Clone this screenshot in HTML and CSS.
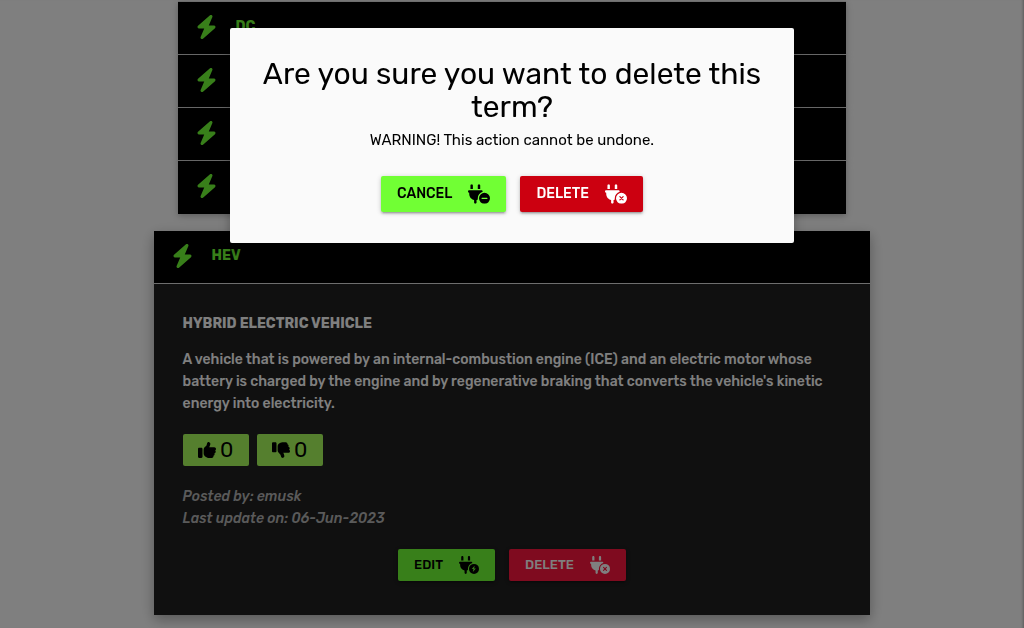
FILE: index.html
```html
<!DOCTYPE html>
<html lang="en">
<head>
<meta charset="utf-8">
<meta name="viewport" content="width=device-width, initial-scale=1">
<title>Delete term</title>
<link rel="stylesheet" href="styles.css">
</head>
<body>
<svg class="sprite" aria-hidden="true">
  <symbol id="bolt" viewBox="0 0 448 512"><path d="M349.400 44.600c5.900-13.700 1.500-29.700-10.600-38.500s-28.600-8-39.900 1.800l-256 224C32.900 240.700 29.300 255.100 34 267.600S50.600 288 64 288H175.500L98.600 467.400c-5.900 13.700-1.500 29.700 10.600 38.500s28.600 8 39.900-1.800l256-224c10-8.800 13.600-22.900 8.900-35.300s-16.600-20.700-30-20.700H272.500L349.400 44.600z"/></symbol>
  <symbol id="plug" viewBox="0 0 576 512"><path d="M96 0C78.300 0 64 14.300 64 32v96h64V32c0-17.700-14.300-32-32-32zM288 0c-17.700 0-32 14.300-32 32v96h64V32c0-17.700-14.300-32-32-32zM32 160c-17.700 0-32 14.300-32 32s14.300 32 32 32v32c0 77.400 55 142 128 156.800V480c0 17.700 14.300 32 32 32s32-14.300 32-32V412.800c12.300-2.500 24.100-6.400 35.100-11.500c-2.100-10.800-3.100-21.900-3.100-33.300c0-80.300 53.800-148 127.300-169.200c.5-2.200 .7-4.500 .7-6.800c0-17.700-14.300-32-32-32H32zM432 512a144 144 0 1 0 0-288 144 144 0 1 0 0 288z"/></symbol>
  <symbol id="thumb" viewBox="0 0 512 512"><path d="M313.400 32.900c26 5.200 42.900 30.500 37.700 56.500l-2.300 11.400c-5.300 26.700-15.100 52.100-28.800 75.200H464c26.500 0 48 21.500 48 48c0 18.500-10.500 34.600-25.900 42.600C497 275.400 504 288.900 504 304c0 23.400-16.800 42.900-38.900 47.100c4.400 7.300 6.900 15.800 6.900 24.900c0 21.300-13.900 39.400-33.100 45.600c.7 3.300 1.100 6.800 1.100 10.400c0 26.500-21.500 48-48 48H294.500c-19 0-37.500-5.600-53.300-16.100l-38.500-25.700C176 420.400 160 390.400 160 358.300V320 272 247.100c0-29.200 13.300-56.700 36-75l7.400-5.900c26.500-21.200 44.600-51 51.200-84.200l2.300-11.400c5.200-26 30.500-42.900 56.500-37.700zM32 192H96c17.700 0 32 14.300 32 32V448c0 17.700-14.300 32-32 32H32c-17.700 0-32-14.300-32-32V224c0-17.700 14.300-32 32-32z"/></symbol>
</svg>
<main>
  <ul class="terms">
    <li class="term"><button class="term-header"><svg class="bolt"><use href="#bolt"/></svg>DC</button></li>
    <li class="term"><button class="term-header" aria-label="Term"><svg class="bolt"><use href="#bolt"/></svg></button></li>
    <li class="term"><button class="term-header" aria-label="Term"><svg class="bolt"><use href="#bolt"/></svg></button></li>
    <li class="term"><button class="term-header" aria-label="Term"><svg class="bolt"><use href="#bolt"/></svg></button></li>
    <li class="term open">
      <button class="term-header" aria-expanded="true"><svg class="bolt"><use href="#bolt"/></svg>HEV</button>
      <div class="term-body">
        <h2>HYBRID ELECTRIC VEHICLE</h2>
        <p class="definition">A vehicle that is powered by an internal-combustion engine (ICE) and an electric motor whose battery is charged by the engine and by regenerative braking that converts the vehicle's kinetic energy into electricity.</p>
        <div class="votes">
          <button class="vote"><svg class="thumb"><use href="#thumb"/></svg>0</button>
          <button class="vote"><svg class="thumb down"><use href="#thumb"/></svg>0</button>
        </div>
        <p class="meta">Posted by: emusk<br>Last update on: 06-Jun-2023</p>
        <div class="actions">
          <button class="btn small green">EDIT<svg class="plug" viewBox="0 0 576 512"><use href="#plug"/><path class="cut-fill" d="M450 278l-82 92h48l-18 88 88-98h-50z"/></svg></button>
          <button class="btn small crimson">DELETE<svg class="plug" viewBox="0 0 576 512"><use href="#plug"/><path class="cut" d="M390 326l84 84M474 326l-84 84"/></svg></button>
        </div>
      </div>
    </li>
  </ul>
</main>
<div class="overlay">
  <div class="modal" role="dialog" aria-modal="true" aria-labelledby="modal-title">
    <h1 id="modal-title">Are you sure you want to delete this term?</h1>
    <p>WARNING! This action cannot be undone.</p>
    <div class="actions">
      <button class="btn green">CANCEL<svg class="plug" viewBox="0 0 576 512"><use href="#plug"/><path class="cut" d="M368 368h128"/></svg></button>
      <button class="btn red">DELETE<svg class="plug" viewBox="0 0 576 512"><use href="#plug"/><path class="cut" d="M390 326l84 84M474 326l-84 84"/></svg></button>
    </div>
  </div>
</div>
</body>
</html>
```
FILE: styles.css
```css
* { box-sizing: border-box; }
body {
  margin: 0;
  background: #fff;
  font-family: Rubik, Roboto, "Liberation Sans", sans-serif;
  font-size: 14px;
  font-weight: 470;
  line-height: 22px;
}
button { font: inherit; border: 0; cursor: pointer; }
h1, h2, p, ul { margin: 0; padding: 0; }
svg { fill: currentColor; }
.sprite { display: none; }
.terms { width: 70%; margin: 0 auto; padding-top: 1px; list-style: none; }
.term {
  margin: 0 24px;
  background: #000;
  box-shadow: 0 2px 5px rgba(0, 0, 0, .16), 0 2px 10px rgba(0, 0, 0, .12);
}
.term:first-child { border-top: 1px solid #ddd; }
.term-header {
  display: flex;
  align-items: center;
  gap: 17px;
  width: 100%;
  height: 53px;
  padding: 0 16px 2px;
  border-bottom: 1px solid #ddd;
  background: #000;
  color: #71ff34;
  font-weight: 700;
}
.term:nth-child(4) .term-header { border-bottom-color: #000; }
.bolt { width: 25px; height: 24px; }
.term.open {
  margin: 17px 0;
  background: #202020;
  box-shadow: 0 5px 11px rgba(0, 0, 0, .18), 0 4px 15px rgba(0, 0, 0, .15);
}
.term-body { padding: 29px 29px 34px; color: #fff; }
.term-body h2 { font-size: 14px; line-height: 22px; font-weight: 700; margin-bottom: 14px; }
.definition { margin-bottom: 19px; }
.votes { display: flex; gap: 8px; margin-bottom: 20px; }
.vote {
  display: flex;
  align-items: center;
  justify-content: center;
  gap: 4px;
  width: 66px;
  height: 32px;
  padding: 0;
  border-radius: 2px;
  background: #aaff5c;
  color: #000;
  font-size: 21px;
  font-weight: 400;
}
.thumb { width: 18px; height: 18px; }
.thumb.down { transform: scaleY(-1); }
.meta { color: #b4b4b4; font-style: italic; margin-bottom: 19px; }
.actions { display: flex; justify-content: center; gap: 14px; }
.btn {
  display: flex;
  align-items: center;
  gap: 16px;
  height: 36px;
  padding: 0 16px;
  border-radius: 2px;
  box-shadow: 0 2px 2px rgba(0, 0, 0, .14), 0 3px 1px -2px rgba(0, 0, 0, .12), 0 1px 5px rgba(0, 0, 0, .2);
}
.btn.small { height: 32px; font-size: 13px; }
.plug { width: 22px; height: 20px; }
.small .plug { width: 20px; height: 18px; }
.green { --fill: #71ff34; background: var(--fill); color: #000; }
.red { --fill: #cc0010; background: var(--fill); color: #fff; }
.crimson { --fill: #ff163e; background: var(--fill); color: #fff; }
.cut { fill: none; stroke: var(--fill); stroke-width: 32; stroke-linecap: round; }
.cut-fill { fill: var(--fill); }
.overlay {
  position: fixed;
  inset: 0;
  padding-top: 28px;
  background: rgba(0, 0, 0, .5);
  box-shadow: inset -3px 0 3px -2px rgba(0, 0, 0, .3);
}
.modal {
  width: 55%;
  margin: 0 auto;
  padding: 30px 22px 31px;
  border-radius: 2px;
  background: #fafafa;
  color: #000;
  text-align: center;
  box-shadow: 0 8px 10px 1px rgba(0, 0, 0, .14), 0 3px 14px 2px rgba(0, 0, 0, .12);
}
.modal h1 { font-size: 30px; line-height: 33px; font-weight: 400; margin-bottom: 5px; }
.modal p { font-size: 15px; font-weight: 400; margin-bottom: 25px; }
```
